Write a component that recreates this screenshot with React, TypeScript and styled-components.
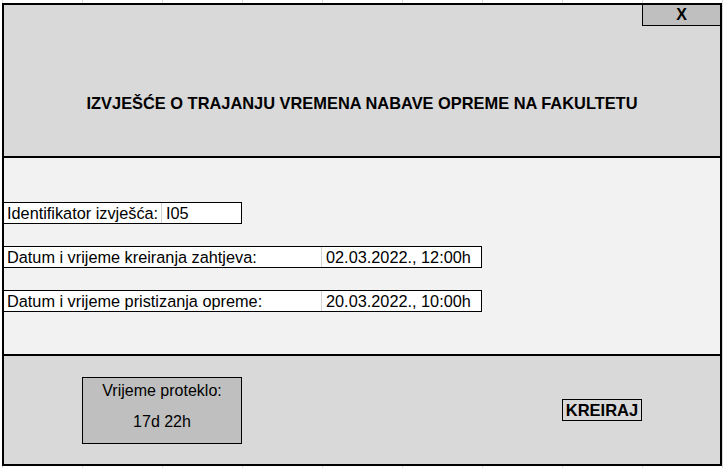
import React from "react";
import styled, { createGlobalStyle } from "styled-components";

const GlobalStyle = createGlobalStyle`
  html, body {
    margin: 0;
    padding: 0;
  }
  body {
    width: 723px;
    height: 468px;
    overflow: hidden;
    background-color: #ffffff;
    background-image: repeating-linear-gradient(
      to right,
      #dadcdd 0px,
      #dadcdd 1px,
      transparent 1px,
      transparent 80px
    );
    background-position: 2px 0;
    font-family: "Liberation Sans", Arial, sans-serif;
    color: #000;
  }
`;

const Frame = styled.div`
  margin: 3px 0 0 2px;
  width: 720px;
  height: 463px;
  box-sizing: border-box;
  border: 2px solid #000;
  display: flex;
  flex-direction: column;
`;

const Header = styled.header`
  height: 153px;
  box-sizing: border-box;
  border-bottom: 2px solid #000;
  background: #d9d9d9;
  display: flex;
  flex-direction: column;
`;

const CloseButton = styled.button`
  align-self: flex-end;
  width: 78px;
  height: 21px;
  box-sizing: border-box;
  margin: 0;
  padding: 0;
  border: none;
  border-left: 1px solid #000;
  border-bottom: 1px solid #000;
  background: #bfbfbf;
  font-family: "Liberation Sans", Arial, sans-serif;
  font-weight: bold;
  font-size: 16px;
  line-height: 20px;
  color: #000;
  text-align: center;
`;

const Title = styled.h1`
  margin: 67px 0 0 0;
  font-size: 16.4px;
  font-weight: bold;
  line-height: 20px;
  text-align: center;
`;

const Middle = styled.section`
  height: 198px;
  box-sizing: border-box;
  border-bottom: 2px solid #000;
  background: #f2f2f2;
  padding-top: 44px;
  display: flex;
  flex-direction: column;
  gap: 22px;
`;

const Row = styled.div<{ $width: number }>`
  width: ${(p) => p.$width}px;
  height: 22px;
  box-sizing: border-box;
  border: 1px solid #000;
  border-left: none;
  background: #fff;
  display: flex;
`;

const LabelCell = styled.div<{ $width: number }>`
  width: ${(p) => p.$width}px;
  box-sizing: border-box;
  border-right: 1px solid #d4d4d4;
  padding-left: 3px;
  font-size: 16.3px;
  line-height: 20px;
  white-space: nowrap;
`;

const ValueCell = styled.div`
  flex: 1;
  padding-left: 4px;
  font-size: 16.3px;
  line-height: 20px;
  white-space: nowrap;
`;

const Footer = styled.footer`
  flex: 1;
  background: #d9d9d9;
  display: flex;
  align-items: center;
  justify-content: space-between;
  padding: 0 78px;
`;

const ElapsedBox = styled.div`
  width: 160px;
  height: 67px;
  box-sizing: border-box;
  border: 1px solid #000;
  background: #bfbfbf;
  display: flex;
  flex-direction: column;
  align-items: center;
  padding-top: 3px;
  gap: 11px;
  font-size: 16px;
  line-height: 20px;
`;

const CreateButton = styled.button`
  width: 80px;
  height: 22px;
  box-sizing: border-box;
  margin: 0;
  padding: 0;
  border: 1px solid #000;
  background: transparent;
  font-family: "Liberation Sans", Arial, sans-serif;
  font-weight: bold;
  font-size: 16.5px;
  line-height: 20px;
  color: #000;
`;

const rows = [
  { label: "Identifikator izvješća:", value: "I05", width: 238, labelWidth: 158 },
  { label: "Datum i vrijeme kreiranja zahtjeva:", value: "02.03.2022., 12:00h", width: 478, labelWidth: 318 },
  { label: "Datum i vrijeme pristizanja opreme:", value: "20.03.2022., 10:00h", width: 478, labelWidth: 318 },
];

export default function App() {
  return (
    <>
      <GlobalStyle />
      <Frame>
        <Header>
          <CloseButton>X</CloseButton>
          <Title>IZVJEŠĆE O TRAJANJU VREMENA NABAVE OPREME NA FAKULTETU</Title>
        </Header>
        <Middle>
          {rows.map((r) => (
            <Row key={r.label} $width={r.width}>
              <LabelCell $width={r.labelWidth}>{r.label}</LabelCell>
              <ValueCell>{r.value}</ValueCell>
            </Row>
          ))}
        </Middle>
        <Footer>
          <ElapsedBox>
            <span>Vrijeme proteklo:</span>
            <span>17d 22h</span>
          </ElapsedBox>
          <CreateButton>KREIRAJ</CreateButton>
        </Footer>
      </Frame>
    </>
  );
}
